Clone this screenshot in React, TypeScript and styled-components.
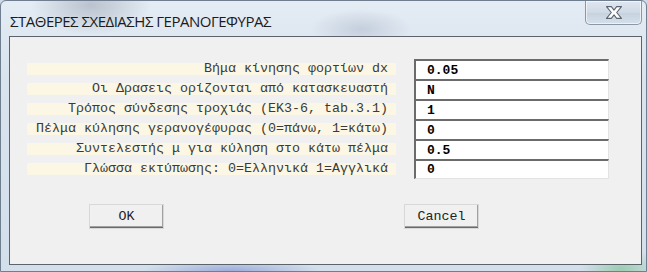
import React from "react";
import styled, { createGlobalStyle } from "styled-components";

const Global = createGlobalStyle`
  html, body { margin: 0; padding: 0; width: 647px; height: 272px; overflow: hidden; background: #cfdbe8; }
  #root { width: 647px; height: 272px; }
`;

const Window = styled.div`
  box-sizing: border-box;
  width: 647px;
  height: 272px;
  display: flex;
  flex-direction: column;
  border: 1px solid #6f7f8f;
  border-radius: 6px 6px 0 0;
  background:
    radial-gradient(ellipse 60px 30px at 90px 4px, rgba(150,160,175,0.55), rgba(150,160,175,0) 100%),
    radial-gradient(ellipse 50px 20px at 360px 28px, rgba(170,180,200,0.5), rgba(170,180,200,0) 100%),
    radial-gradient(ellipse 90px 12px at 230px 270px, rgba(110,130,200,0.55), rgba(110,130,200,0) 100%),
    radial-gradient(ellipse 40px 20px at 620px 268px, rgba(120,190,140,0.6), rgba(120,190,140,0) 100%),
    linear-gradient(180deg, #e4ecf4 0%, #d8e3ee 30%, #d3dfeb 100%);
  overflow: hidden;
`;

const TitleBar = styled.div`
  height: 35px;
  display: flex;
  align-items: flex-start;
  justify-content: space-between;
  padding-left: 9px;
`;

const Title = styled.div`
  margin-top: 10px;
  font-family: "Open Sans", "Noto Sans", sans-serif;
  font-size: 15px;
  line-height: 20px;
  color: #1b1b1b;
  letter-spacing: -0.5px;
`;

const CloseButton = styled.div`
  width: 57px;
  height: 24px;
  margin-right: 4px;
  box-sizing: border-box;
  border: 1px solid #8a97a6;
  border-top: none;
  border-radius: 0 0 5px 5px;
  background: linear-gradient(180deg, #dfe7f0 0%, #cfdae6 50%, #c5d2df 51%, #d6e0ea 100%);
  display: flex;
  align-items: center;
  justify-content: center;
  box-shadow: inset 0 0 0 1px rgba(255,255,255,0.6);
`;

const Client = styled.div`
  box-sizing: border-box;
  margin: 0 4px 6px 8px;
  flex: 1;
  border: 1px solid #5c636b;
  background: #f0f0f0;
  padding: 22px 0 0 17px;
  display: flex;
  flex-direction: column;
`;

const Form = styled.div`
  display: grid;
  grid-template-columns: 369px 195px;
  grid-auto-rows: 20px;
  column-gap: 18px;
`;

const Label = styled.div`
  align-self: center;
  height: 12px;
  background: #fcf6e4;
  display: flex;
  align-items: center;
  justify-content: flex-end;
  padding-right: 8px;
  font-family: "Liberation Mono", "Courier New", monospace;
  font-size: 13.33px;
  line-height: 12px;
  color: #3a3a3a;
  white-space: pre;
`;

const Field = styled.div<{ $last?: boolean }>`
  box-sizing: border-box;
  height: 20px;
  background: #ffffff;
  border-top: 2px solid #6b6b6b;
  border-left: 2px solid #6b6b6b;
  border-right: 1px solid #e3e3e3;
  border-bottom: ${(p) => (p.$last ? "1px solid #e3e3e3" : "none")};
  display: flex;
  align-items: center;
  padding-left: 11px;
  font-family: "Liberation Mono", "DejaVu Sans Mono", monospace;
  font-weight: bold;
  font-size: 13px;
  color: #000;
`;

const Buttons = styled.div`
  display: flex;
  gap: 240px;
  padding: 25px 0 0 62px;
`;

const Button = styled.div`
  box-sizing: border-box;
  width: 75px;
  height: 25px;
  background: #f0f0f0;
  border-top: 1px solid #ffffff;
  border-left: 1px solid #ffffff;
  border-right: 1px solid #6b6b6b;
  border-bottom: 2px solid #6b6b6b;
  box-shadow: inset -1px -1px 0 #a0a0a0;
  outline: 1px solid #d8d8d8;
  outline-offset: -1px;
  display: flex;
  align-items: center;
  justify-content: center;
  font-family: "Liberation Mono", "Courier New", monospace;
  font-size: 13.33px;
  color: #222;
`;

const rows: [string, string][] = [
  ["Βήμα κίνησης φορτίων dx", "0.05"],
  ["Οι Δρασεις ορίζονται από κατασκευαστή", "N"],
  ["Τρόπος σύνδεσης τροχιάς (EK3-6, tab.3.1)", "1"],
  ["Πέλμα κύλησης γερανογέφυρας (0=πάνω, 1=κάτω)", "0"],
  ["Συντελεστής μ για κύληση στο κάτω πέλμα", "0.5"],
  ["Γλώσσα εκτύπωσης: 0=Ελληνικά 1=Αγγλικά", "0"],
];

const CloseIcon = () => (
  <svg width="20" height="15" viewBox="0 0 18 14">
    <path
      d="M2 1.5 H6.5 L9 4.8 L11.5 1.5 H16 L11.5 7 L16 12.5 H11.5 L9 9.2 L6.5 12.5 H2 L6.5 7 Z"
      fill="#ffffff"
      stroke="#5a6470"
      strokeWidth="1"
      strokeLinejoin="round"
    />
  </svg>
);

export default function App() {
  return (
    <>
      <Global />
      <Window>
        <TitleBar>
          <Title>ΣΤΑΘΕΡΕΣ ΣΧΕΔΙΑΣΗΣ ΓΕΡΑΝΟΓΕΦΥΡΑΣ</Title>
          <CloseButton>
            <CloseIcon />
          </CloseButton>
        </TitleBar>
        <Client>
          <Form>
            {rows.map(([label, value], i) => (
              <React.Fragment key={i}>
                <Label>{label}</Label>
                <Field $last={i === rows.length - 1}>{value}</Field>
              </React.Fragment>
            ))}
          </Form>
          <Buttons>
            <Button>OK</Button>
            <Button>Cancel</Button>
          </Buttons>
        </Client>
      </Window>
    </>
  );
}
